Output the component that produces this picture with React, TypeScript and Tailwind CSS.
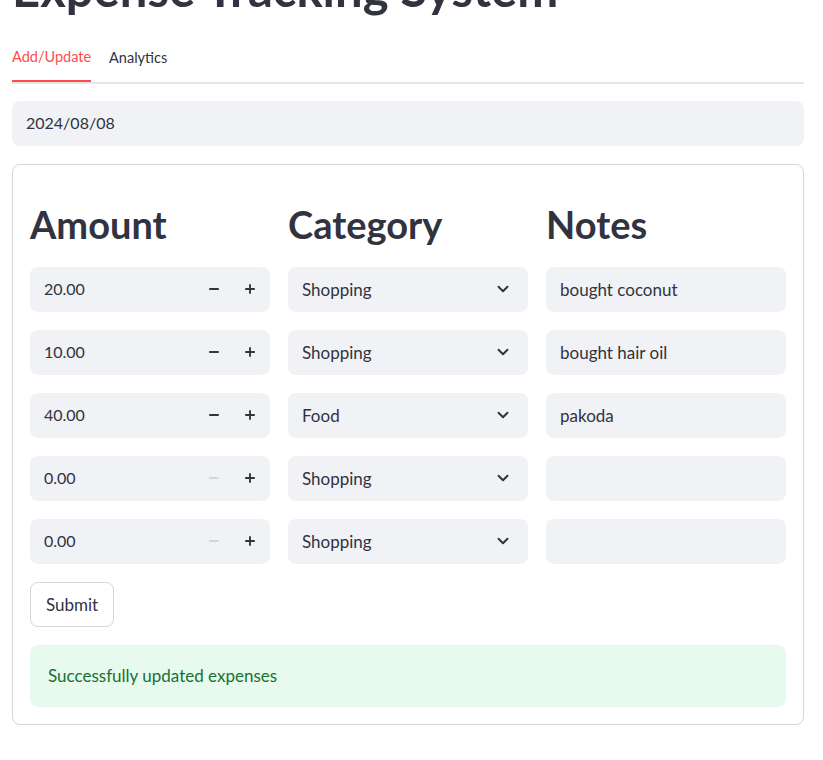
import { ChevronDown, Minus, Plus } from "lucide-react";

const rows = [
  { amount: "20.00", category: "Shopping", notes: "bought coconut" },
  { amount: "10.00", category: "Shopping", notes: "bought hair oil" },
  { amount: "40.00", category: "Food", notes: "pakoda" },
  { amount: "0.00", category: "Shopping", notes: "" },
  { amount: "0.00", category: "Shopping", notes: "" },
];

type Row = (typeof rows)[number];

function AmountInput({ value }: { value: string }) {
  const zero = value === "0.00";
  return (
    <div className="h-[45px] rounded-lg bg-[#f0f2f6] flex items-center pl-[14px] pr-[2px]">
      <span className="flex-1 text-[16px]">{value}</span>
      <button className="w-[36px] h-full flex items-center justify-center">
        <Minus size={14} strokeWidth={3.2} className={zero ? "text-[#d3d6dc]" : "text-[#31333f]"} />
      </button>
      <button className="w-[36px] h-full flex items-center justify-center">
        <Plus size={14} strokeWidth={3.2} className="text-[#31333f]" />
      </button>
    </div>
  );
}

function CategorySelect({ value }: { value: string }) {
  return (
    <div className="h-[45px] rounded-lg bg-[#f0f2f6] flex items-center pl-[14px] pr-[16px]">
      <span className="flex-1 text-[17px]">{value}</span>
      <ChevronDown size={18} strokeWidth={2.6} className="text-[#31333f]" />
    </div>
  );
}

function NotesInput({ value }: { value: string }) {
  return (
    <div className="h-[45px] rounded-lg bg-[#f0f2f6] flex items-center px-[14px]">
      <span className="text-[17px]">{value}</span>
    </div>
  );
}

const columns = [
  { title: "Amount", render: (r: Row) => <AmountInput value={r.amount} /> },
  { title: "Category", render: (r: Row) => <CategorySelect value={r.category} /> },
  { title: "Notes", render: (r: Row) => <NotesInput value={r.notes} /> },
];

export default function App() {
  return (
    <div
      className="w-[823px] h-[760px] overflow-hidden bg-white text-[#31333f]"
      style={{ fontFamily: "Lato, 'Noto Sans', sans-serif" }}
    >
      <div className="pl-3 pr-[19px]">
        <h1 className="text-[49px] font-bold leading-[1.2] mt-[-41px] whitespace-nowrap">
          Expense Tracking System
        </h1>

        <div className="mt-[22px] flex gap-[18px] border-b-2 border-[#e6e6ea] text-[14.5px]">
          <div className="h-[42px] pb-[6px] flex items-center text-[#ff4b4b] border-b-2 border-[#ff4b4b] mb-[-2px]">
            Add/Update
          </div>
          <div className="h-[42px] pb-[6px] flex items-center">Analytics</div>
        </div>

        <div className="mt-[17px] h-[45px] rounded-lg bg-[#f0f2f6] flex items-center px-[14px] text-[16px]">
          2024/08/08
        </div>

        <div className="mt-[18px] border border-[#d6d6d9] rounded-lg p-[17px]">
          <div className="grid grid-cols-3 gap-x-[18px]">
            {columns.map((col) => (
              <div key={col.title} className="flex flex-col gap-[18px]">
                <h2 className="text-[38px] font-bold leading-[1.2] pt-[11px] pb-[10px] mb-[-18px] h-[85px] flex items-center">
                  {col.title}
                </h2>
                {rows.map((r, i) => (
                  <div key={i}>{col.render(r)}</div>
                ))}
              </div>
            ))}
          </div>

          <button className="mt-[18px] h-[45px] px-[15px] rounded-lg border border-[#d6d6d9] bg-white text-[17px]">
            Submit
          </button>

          <div className="mt-[18px] h-[62px] rounded-lg bg-[#e8f9ee] text-[#177233] flex items-center px-[18px] text-[17px]">
            Successfully updated expenses
          </div>
        </div>
      </div>
    </div>
  );
}
